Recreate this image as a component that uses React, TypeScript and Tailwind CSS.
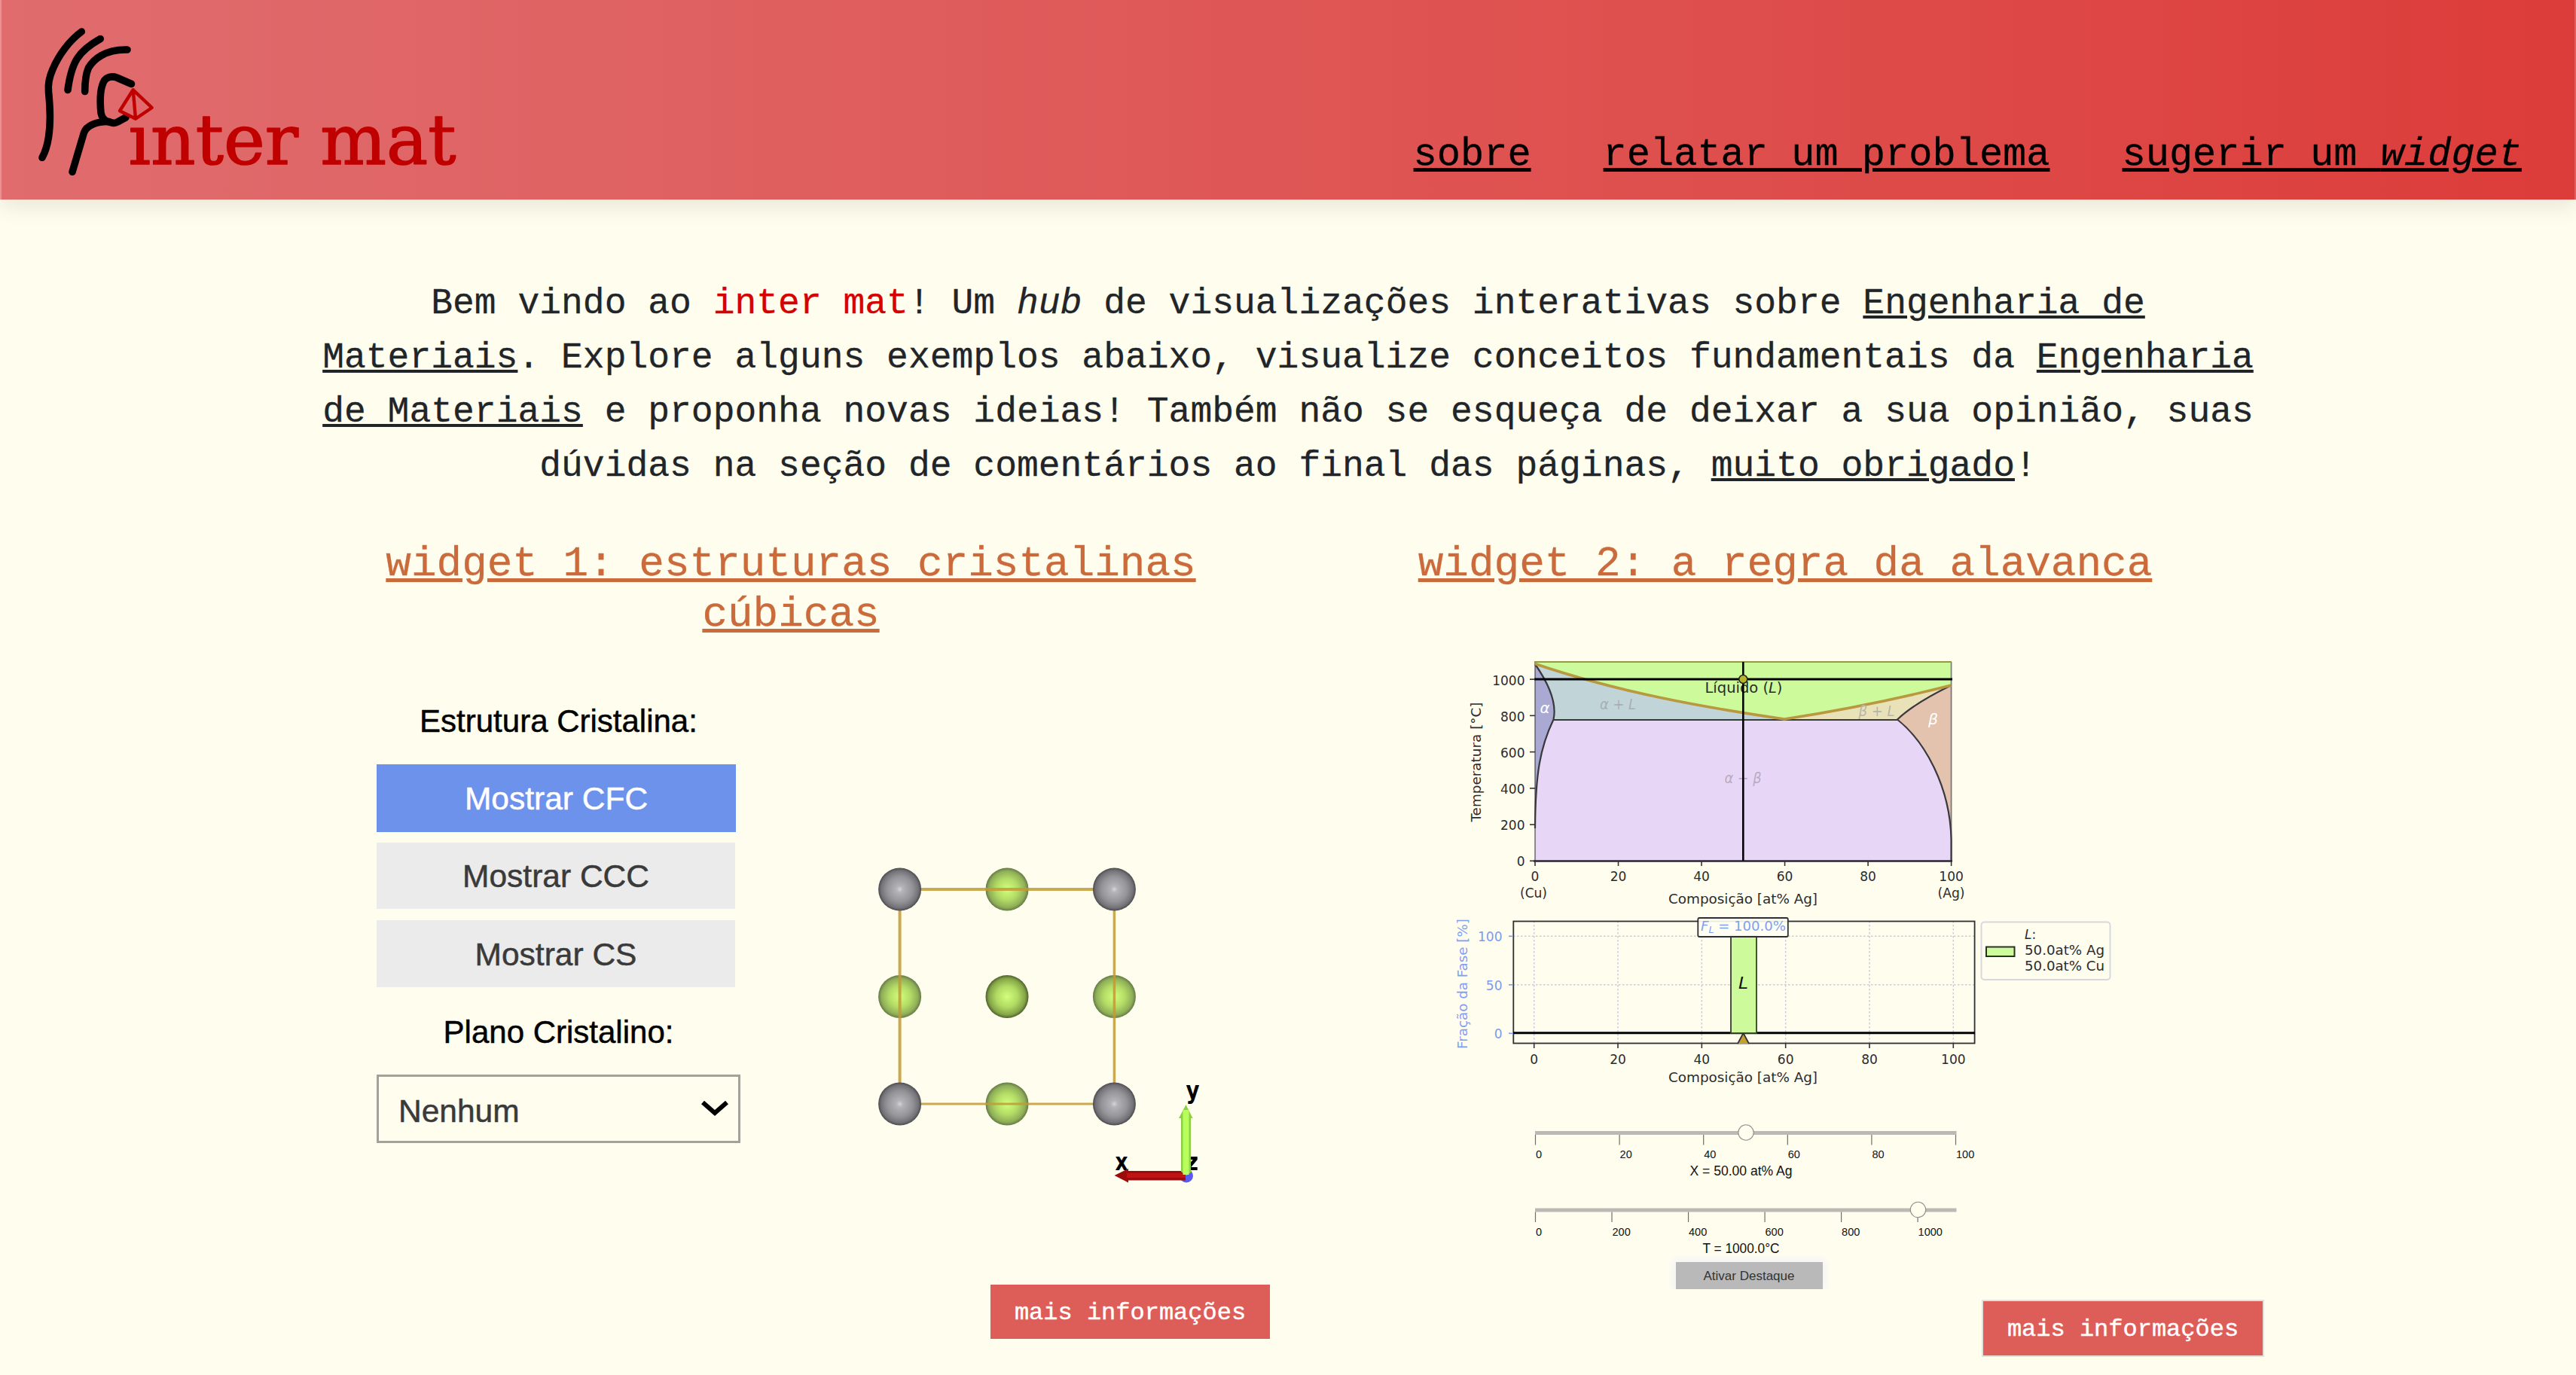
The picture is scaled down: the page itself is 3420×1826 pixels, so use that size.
import React from "react";

const link = "underline decoration-[4px] underline-offset-[3px]";
const dejavu = "'DejaVu Sans', sans-serif";
const helv = "'Liberation Sans', Arial, sans-serif";

type LabelProps = {
  x: number;
  y: number;
  w?: number;
  size?: number;
  fill?: string;
  anchor?: "start" | "middle" | "end";
  italic?: boolean;
  font?: string;
  bold?: boolean;
  children: React.ReactNode;
};

function Label({ x, y, w, size = 17, fill = "#2b2b2f", anchor = "start", italic, font = dejavu, bold, children }: LabelProps) {
  return (
    <text
      x={x}
      y={y}
      fontFamily={font}
      fontSize={size}
      fill={fill}
      textAnchor={anchor}
      fontStyle={italic ? "italic" : undefined}
      fontWeight={bold ? 700 : undefined}
      textLength={w}
      lengthAdjust={w ? "spacingAndGlyphs" : undefined}
    >
      {children}
    </text>
  );
}

function Logo() {
  return (
    <svg className="block h-[240px] w-[620px]" viewBox="0 0 620 240" fill="none" strokeLinecap="round" strokeLinejoin="round">
      <g stroke="#000" strokeWidth="9.6">
        <path d="M108.300 42C92 54 78 73 70 92C65 103 63.500 112 64.500 122C67 146 67 166 64.500 182C62.500 195 60 202 56 209.300" />
        <path d="M133.300 51.500C104 68 95 82 90 119.500" />
        <path d="M169 66C140 65 124 79 117.500 90C114 98 112.700 110 112.700 121.500" />
        <path d="M174.500 111.500L155 103C148 100.500 142 102.500 138.500 107C133 116 132.500 134 134 150C135.500 157 138.500 160 143 161.500L150 163.300Q153 163.800 156 162L167 156" />
        <path d="M145 161.500C128 161 115 167 111.500 176C108 188 102 208 96 228.300" />
      </g>
      <path d="M176.700 119.300L159 147.300L180 157.700L201.700 143ZL180 157.700" stroke="#c00000" strokeWidth="4.400" />
      <text
        x="170.500"
        y="218"
        fontFamily="'DejaVu Serif', serif"
        fontSize="91"
        fill="#c00000"
        stroke="#c00000"
        strokeWidth="1.600"
        textLength="435"
        lengthAdjust="spacingAndGlyphs"
      >
        ınter mat
      </text>
    </svg>
  );
}

function Header() {
  return (
    <header className="relative flex h-[265px] items-end justify-between border-x-2 border-l-[#e69394] border-r-[#e2605e] bg-gradient-to-r from-[#e06c6e] to-[#dc3c3a] pr-[70px] shadow-[0_8px_28px_rgba(0,0,0,0.1)]">
      <div className="-ml-0.5 self-start">
        <Logo />
      </div>
      <nav className="mb-[20px] flex gap-24 text-[52px] leading-[78px] text-black [-webkit-text-stroke:0.3px]">
        <a className="underline decoration-[5px] underline-offset-[4px]">sobre</a>
        <a className="underline decoration-[5px] underline-offset-[4px]">relatar um problema</a>
        <a className="underline decoration-[5px] underline-offset-[4px]">
          sugerir um <em>widget</em>
        </a>
      </nav>
    </header>
  );
}

function Atom({ x, y, kind }: { x: number; y: number; kind: "gray" | "green" | "bright" }) {
  const fills = { gray: "url(#atomGray)", green: "url(#atomGreen)", bright: "url(#atomBright)" };
  return <circle cx={x} cy={y} r="28.500" fill={fills[kind]} />;
}

function CrystalView() {
  const [l, m, r] = [1194.6, 1337, 1479.4];
  const [t, c, b] = [1181, 1323.5, 1466];
  return (
    <svg className="block h-[480px] w-[480px]" viewBox="1150 1120 480 480">
      <defs>
        <radialGradient id="atomGray">
          <stop offset="0" stopColor="#d6d6d9" />
          <stop offset="0.15" stopColor="#b4b3b8" />
          <stop offset="0.6" stopColor="#949398" />
          <stop offset="0.87" stopColor="#737277" />
          <stop offset="1" stopColor="#4c4b50" />
        </radialGradient>
        <radialGradient id="atomGreen">
          <stop offset="0" stopColor="#d2ff7c" />
          <stop offset="0.5" stopColor="#b3dc66" />
          <stop offset="0.85" stopColor="#8fae58" />
          <stop offset="1" stopColor="#647a45" />
        </radialGradient>
        <radialGradient id="atomBright">
          <stop offset="0" stopColor="#d2ff7c" />
          <stop offset="0.5" stopColor="#b0da62" />
          <stop offset="0.85" stopColor="#84a448" />
          <stop offset="1" stopColor="#4d612a" />
        </radialGradient>
      </defs>
      <Atom x={m} y={t} kind="green" />
      <Atom x={l} y={c} kind="green" />
      <Atom x={r} y={c} kind="green" />
      <Atom x={m} y={b} kind="green" />
      <Atom x={m} y={c} kind="bright" />
      <g stroke="#c29a35" strokeOpacity="0.85">
        <path d={`M${l} ${t}H${r}`} strokeWidth="4" />
        <path d={`M${l} ${t}V${b}`} strokeWidth="4" />
        <path d={`M${r} ${t}V${b}`} strokeWidth="3.500" />
        <path d={`M${l} ${b}H${r}`} strokeWidth="3" />
      </g>
      <Atom x={l} y={t} kind="gray" />
      <Atom x={r} y={t} kind="gray" />
      <Atom x={l} y={b} kind="gray" />
      <Atom x={r} y={b} kind="gray" />
      <Label x={1574.5} y={1459} size={32} w={18} fill="#000" bold>y</Label>
      <Label x={1480.5} y={1553.5} size={32} w={17} fill="#000" bold>x</Label>
      <Label x={1574} y={1553.5} size={32} w={17} fill="#000" bold>z</Label>
      <circle cx="1575" cy="1561.500" r="9" fill="#5a5af0" />
      <path d="M1479.500 1561L1498 1552V1555H1574V1567.500H1498V1570.500Z" fill="#9c0c0c" />
      <path d="M1496 1561H1574" stroke="#c01414" strokeWidth="6" />
      <path d="M1574.500 1467L1583.500 1485H1581V1557L1575 1561L1568 1556V1485H1565Z" fill="#8fcf48" />
      <path d="M1574.500 1474V1560" stroke="#b8ff5c" strokeWidth="8" />
    </svg>
  );
}

function CrystalWidget() {
  return (
    <div className="flex h-[854px] pl-[86px] font-['Liberation_Sans',Arial,sans-serif] text-[42.5px] leading-[50px]">
      <div className="flex w-[483px] flex-col pt-[81px]">
        <p className="text-center text-[42px] text-black [-webkit-text-stroke:0.5px]">Estrutura Cristalina:</p>
        <button className="mt-8 h-[90px] w-[477px] bg-[#6c92ec] pt-0.5 text-white [-webkit-text-stroke:0.5px]">Mostrar CFC</button>
        <button className="mt-3.5 h-[88px] w-[476px] bg-[#ebebeb] pt-0.5 text-[#3a3a3a] [-webkit-text-stroke:0.5px]">Mostrar CCC</button>
        <button className="mt-[15px] h-[89px] w-[476px] bg-[#ebebeb] pt-0.5 text-[#3a3a3a] [-webkit-text-stroke:0.5px]">Mostrar CS</button>
        <p className="mt-[35px] text-center text-[42px] text-black [-webkit-text-stroke:0.5px]">Plano Cristalino:</p>
        <div className="mt-[31px] flex h-[91px] items-center justify-between border-[3px] border-[#a2a19a] pt-1.5 pr-[12px] pl-[26px] text-[#3a3a3a] [-webkit-text-stroke:0.5px]">
          <span>Nenhum</span>
          <svg className="-mt-2 h-6 w-[38px]" viewBox="0 0 38 24" fill="none">
            <path d="M3 4L19 18L35 4" stroke="#000" strokeWidth="6" />
          </svg>
        </div>
      </div>
      <div className="ml-[167px] pt-[268px]">
        <CrystalView />
      </div>
    </div>
  );
}

const xTicks = [0, 20, 40, 60, 80, 100];

function PhaseDiagram() {
  return (
    <svg className="block h-[590px] w-[900px]" viewBox="1920 860 900 590">
      <rect x="2038" y="879" width="552.600" height="264.500" fill="#e8d6f7" />
      <path d="M2038 879H2590.600V910C2520 928 2440 944 2369 955C2259 939 2148 919 2038 882Z" fill="#cdfb9c" />
      <path d="M2038 882C2148 919 2259 939 2369 955.500H2062.500C2068 930 2052 902 2038 882Z" fill="#c1d5d8" />
      <path d="M2369 955.500C2440 944 2520 928 2590.600 910C2560 925 2535 940 2519 955.500Z" fill="#e9e2b9" />
      <path d="M2038 882C2052 902 2068 930 2062.500 955.500C2045 992 2038.500 1026 2038 1100Z" fill="#a9a9d4" />
      <path d="M2590.600 910C2560 925 2535 940 2519 955.500C2556 985 2589 1045 2590.600 1115Z" fill="#e3c2ae" />
      <g fill="none" stroke="#39393d" strokeWidth="2.200">
        <path d="M2038 882C2052 902 2068 930 2062.500 955.500C2045 992 2038.500 1026 2038 1100" />
        <path d="M2590.600 910C2560 925 2535 940 2519 955.500C2556 985 2589 1045 2590.600 1115V1143" />
        <path d="M2062.500 956H2519" />
        <path d="M2038 879V1143M2590.600 879V1143" strokeOpacity="0.6" strokeWidth="1.800" />
      </g>
      <path d="M2037 879H2591" stroke="#9a9648" strokeWidth="1.800" />
      <path d="M2038 881.500C2148 919 2259 939 2369 955C2440 944 2520 928 2590.600 910" fill="none" stroke="#b9993f" strokeWidth="3.600" />
      <path d="M2036 1143.500H2592" stroke="#28222e" strokeWidth="2.400" />

      <Label x={2263.5} y={920} w={103} size={19}>
        Líquido (<tspan fontStyle="italic">L</tspan>)
      </Label>
      <Label x={2124} y={941.5} w={48} size={20} italic fill="#a9aeb4">α + L</Label>
      <Label x={2467.5} y={951} w={48} size={20} italic fill="#b9b5a6">β + L</Label>
      <Label x={2044.5} y={947} w={13} size={20} italic fill="#fff">α</Label>
      <Label x={2560} y={962} w={13} size={20} italic fill="#fff">β</Label>
      <Label x={2289.5} y={1040} w={49} size={20} italic fill="#b7abc2">α + β</Label>

      <path d="M2037 902H2592" stroke="#000" strokeWidth="3" />
      <path d="M2314.300 879V1143" stroke="#000" strokeWidth="2.600" />
      <circle cx="2314.300" cy="902" r="5.500" fill="#b8b22e" stroke="#222" strokeWidth="1.500" />

      {[0, 200, 400, 600, 800, 1000].map((v) => (
        <g key={v}>
          <path d={`M2031 ${1143.3 - v * 0.2412}h7`} stroke="#333" strokeWidth="1.600" />
          <Label x={2024.5} y={1150 - v * 0.2405} anchor="end">{v}</Label>
        </g>
      ))}
      {xTicks.map((v) => (
        <g key={v}>
          <path d={`M${2038 + v * 5.526} 1143v7`} stroke="#333" strokeWidth="1.600" />
          <Label x={2038 + v * 5.526} y={1170} anchor="middle">{v}</Label>
        </g>
      ))}
      <Label x={2018} y={1191.5} w={36}>(Cu)</Label>
      <Label x={2572.5} y={1191.5} w={36}>(Ag)</Label>
      <Label x={2215} y={1199.5} w={198}>Composição [at% Ag]</Label>
      <g transform="translate(1965.500 1091.500) rotate(-90)">
        <Label x={0} y={0} w={159}>Temperatura [°C]</Label>
      </g>

      <g stroke="#c9c9e0" strokeWidth="1.500" strokeDasharray="2.500 2.500">
        {xTicks.map((v) => (
          <path key={v} d={`M${2036.7 + v * 5.566} 1223V1385`} />
        ))}
        <path d="M2009 1243.300H2621M2009 1307.700H2621" />
      </g>
      <rect x="2009.300" y="1223.500" width="612.300" height="162" fill="none" stroke="#2f2f33" strokeWidth="1.800" />
      <path d="M2314.500 1372L2321.500 1386H2307.500Z" fill="#c2a033" />
      <path d="M2307 1386L2314.500 1372L2322 1386" fill="none" stroke="#333" strokeWidth="1.800" />
      <path d="M2009 1371.700H2622" stroke="#000" strokeWidth="3" />
      <rect x="2298" y="1243" width="34" height="129" fill="#cdfb9c" stroke="#33402a" strokeWidth="1.800" />
      <Label x={2308} y={1313} w={13} size={22} italic fill="#111">L</Label>
      <rect x="2254.300" y="1219" width="119.500" height="25" rx="2" fill="#fffff4" fillOpacity="0.9" stroke="#2f2f33" strokeWidth="1.800" />
      <text x="2258" y="1235.700" fontFamily={dejavu} fontSize="17" fill="#809ff0" textLength="113" lengthAdjust="spacingAndGlyphs">
        <tspan fontStyle="italic">F</tspan>
        <tspan fontStyle="italic" fontSize="12" dy="3">L</tspan>
        <tspan dy="-3"> = 100.0%</tspan>
      </text>
      {[0, 50, 100].map((v) => (
        <g key={v}>
          <path d={`M2003 ${1372.3 - v * 1.29}h6`} stroke="#7b9bee" strokeWidth="1.600" />
          <Label x={1994.5} y={1379 - v * 1.29} anchor="end" fill="#7b9bf2">{v}</Label>
        </g>
      ))}
      {xTicks.map((v) => (
        <g key={v}>
          <path d={`M${2036.7 + v * 5.566} 1385v7`} stroke="#333" strokeWidth="1.600" />
          <Label x={2036.7 + v * 5.566} y={1412.5} anchor="middle">{v}</Label>
        </g>
      ))}
      <Label x={2215} y={1437} w={198}>Composição [at% Ag]</Label>
      <g transform="translate(1948 1393) rotate(-90)">
        <Label x={0} y={0} w={173} fill="#809ff0">Fração da Fase [%]</Label>
      </g>

      <rect x="2630.500" y="1224.500" width="171" height="76.500" rx="4" fill="none" stroke="#d8d8dc" strokeWidth="2" />
      <rect x="2637" y="1257.500" width="37.500" height="12.500" fill="#cdfb9c" stroke="#2a3024" strokeWidth="2" />
      <Label x={2688} y={1247}>
        <tspan fontStyle="italic">L</tspan>:
      </Label>
      <Label x={2688} y={1268} w={106}>50.0at% Ag</Label>
      <Label x={2688} y={1288.5} w={106}>50.0at% Cu</Label>
    </svg>
  );
}

type ScaleProps = { top: number; ticks: { x: number; v: number }[]; knob: number };

function Scale({ top, ticks, knob }: ScaleProps) {
  return (
    <g>
      <rect x="2038" y={top} width="559.500" height="5" fill="#bab9b3" />
      {ticks.map(({ x, v }) => (
        <g key={v}>
          <path d={`M${x} ${top + 5}v13.500`} stroke="#6f6f6a" strokeWidth="1.200" />
          <Label x={x + 0.5} y={top + 36} size={14.5} font={helv} fill="#111">{v}</Label>
        </g>
      ))}
      <circle cx={knob} cy={top + 2} r="10.200" fill="#fffeee" stroke="#8f8e88" strokeWidth="1.100" />
    </g>
  );
}

function Sliders() {
  return (
    <svg className="block h-[216px] w-[900px]" viewBox="1920 1450 900 216">
      <Scale top={1502} knob={2318} ticks={xTicks.map((v) => ({ v, x: 2038.5 + v * 5.58 }))} />
      <Label x={2243.5} y={1561} w={136} size={17.5} font={helv} fill="#111">X = 50.00 at% Ag</Label>
      <Scale top={1604.5} knob={2546.5} ticks={[0, 200, 400, 600, 800, 1000].map((v) => ({ v, x: 2038.5 + v * 0.5076 }))} />
      <Label x={2260.5} y={1663.5} w={102} size={17.5} font={helv} fill="#111">T = 1000.0°C</Label>
    </svg>
  );
}

function LeverWidget() {
  return (
    <div className="flex h-[874px] flex-col items-center pt-2">
      <PhaseDiagram />
      <Sliders />
      <div className="mr-24 overflow-hidden px-4 pt-[10px]">
        <button className="block h-9 w-[195px] bg-[#b9b9b9] pt-0.5 font-['Liberation_Sans',Arial,sans-serif] text-[17px] leading-[34px] text-[#333] shadow-[0_0_12px_3px_#f0f0fa]">
          Ativar Destaque
        </button>
      </div>
    </div>
  );
}

function MoreInfo({ bordered }: { bordered?: boolean }) {
  return (
    <div className="flex justify-end">
      <button
        className={
          bordered
            ? "h-[76px] w-[375px] border-2 border-[#e3e0dc] bg-[#dd5e59] pt-1 text-[32px] text-white [-webkit-text-stroke:0.4px]"
            : "h-[72px] w-[371px] bg-[#dd5e59] pt-1 text-[32px] text-white [-webkit-text-stroke:0.4px]"
        }
      >
        mais informações
      </button>
    </div>
  );
}

function Column({ title, children }: { title: React.ReactNode; children: React.ReactNode }) {
  return (
    <section className="w-[1320px] px-6">
      <h2 className="-mt-px h-[136px] text-center text-[56px] leading-[67.2px] text-[#cb6a3b] underline decoration-[5px] underline-offset-[4px] [-webkit-text-stroke:0.3px]">
        {title}
      </h2>
      {children}
    </section>
  );
}

export default function App() {
  return (
    <div className="h-[1826px] overflow-hidden bg-[#fffeee] font-['Liberation_Mono',monospace]">
      <Header />
      <main className="mx-auto w-[2640px] pt-[102px]">
        <p className="text-center text-5xl leading-[72px] whitespace-nowrap text-[#212529] [-webkit-text-stroke:0.3px]">
          Bem vindo ao <span className="text-[#d60000]">inter mat</span>! Um <em>hub</em> de visualizações interativas sobre{" "}
          <span className={link}>Engenharia de</span>
          <br />
          <span className={link}>Materiais</span>. Explore alguns exemplos abaixo, visualize conceitos fundamentais da{" "}
          <span className={link}>Engenharia</span>
          <br />
          <span className={link}>de Materiais</span> e proponha novas ideias! Também não se esqueça de deixar a sua opinião, suas
          <br />
          dúvidas na seção de comentários ao final das páginas, <span className={link}>muito obrigado</span>!
        </p>
        <div className="mt-[62px] flex">
          <Column
            title={
              <>
                widget 1: estruturas cristalinas
                <br />
                cúbicas
              </>
            }
          >
            <CrystalWidget />
            <MoreInfo />
          </Column>
          <Column title="widget 2: a regra da alavanca">
            <LeverWidget />
            <MoreInfo bordered />
          </Column>
        </div>
      </main>
    </div>
  );
}
